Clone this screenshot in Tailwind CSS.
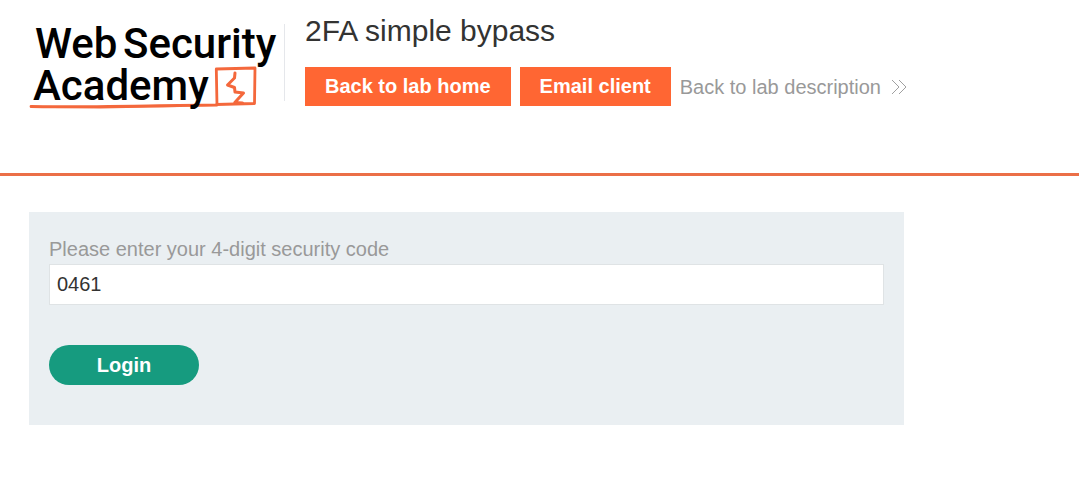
<!DOCTYPE html>
<html lang="en">
<head>
<meta charset="utf-8">
<meta name="viewport" content="width=device-width, initial-scale=1">
<title>2FA simple bypass</title>
<script src="https://cdn.jsdelivr.net/npm/@tailwindcss/browser@4"></script>
</head>
<body class="min-h-screen bg-white font-['Liberation_Sans',Arial,sans-serif] text-xl text-[#333332]">
<header class="flex items-start border-b-3 border-[#eb6f47] px-7 pt-[13px] pb-[67px]">
  <a href="#" aria-label="Web Security Academy" class="mt-[11px] h-[77px] shrink-0 border-r border-gray-200 pr-1">
    <svg class="h-22 w-63 overflow-visible" viewBox="28 24 252 88" fill="none">
      <g stroke="#f4683c" stroke-linecap="round" stroke-linejoin="round">
        <path d="M31 106.500C70 107.500 130 106 217 105L216.300 69L255 68L254.500 103.500L216.500 104.500" stroke-width="2.800"/>
        <path d="M31 106.800L100 107.500L180 106" stroke-width="2"/>
        <path d="M235 73L234.500 78L227.500 85L234.500 87.500L235 92L243.500 93L234.800 102.500L242.500 103" stroke-width="3"/>
      </g>
      <g class="font-[Roboto,sans-serif] text-[42px] font-medium" fill="#000">
        <text x="35" y="58">Web</text>
        <text x="123" y="58">Security</text>
        <text x="33" y="100">Academy</text>
      </g>
    </svg>
  </a>
  <div class="ml-5 min-w-0 flex-1">
    <h1 class="text-3xl leading-9">2FA simple bypass</h1>
    <nav class="mt-[18px] flex flex-wrap items-center gap-[9px]">
      <a href="#" class="bg-[#ff6633] px-5 py-[5px] leading-[29px] font-bold text-white">Back to lab home</a>
      <a href="#" class="bg-[#ff6633] px-5 py-[5px] leading-[29px] font-bold text-white">Email client</a>
      <a href="#" class="flex items-center gap-2.5 text-[#999999]">Back to lab description
        <svg class="h-4 w-4" viewBox="0 0 16 16" fill="none" stroke="#a0a0a0" aria-hidden="true"><path d="M1 1L8 8L1 15M8 1L15 8L8 15"/></svg>
      </a>
    </nav>
  </div>
</header>
<main class="px-[29px] pt-9">
  <form class="w-full max-w-[875px] bg-[#eaeff2] px-5 pt-[22px] pb-10">
    <label for="code" class="block leading-[30px] text-[#999999]">Please enter your 4-digit security code</label>
    <input id="code" type="text" value="0461" class="block h-[41px] w-full border border-[#dfe3e5] bg-white px-[7px] outline-none">
    <button type="button" class="mt-10 h-10 w-[150px] rounded-full bg-[#169b7f] font-bold text-white">Login</button>
  </form>
</main>
</body>
</html>
